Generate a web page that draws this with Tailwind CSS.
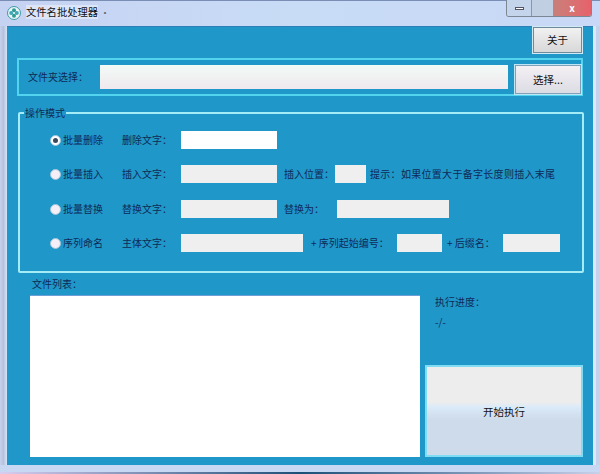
<!DOCTYPE html>
<html lang="zh">
<head>
<meta charset="utf-8">
<script src="https://cdn.jsdelivr.net/npm/@tailwindcss/browser@4"></script>
<title>文件名批处理器</title>
</head>
<body class="m-0">
<div class="w-[600px] h-[474px] overflow-hidden flex flex-col bg-[#c9d8f2] text-[10px] leading-[14px] text-[#0f2a58] font-['Noto_Sans_CJK_SC','Liberation_Sans',sans-serif]">
  <!-- title bar -->
  <div class="h-[26px] shrink-0 flex items-start bg-gradient-to-r from-[#c6d2f2] via-[#c8dcf6] to-[#c8d8f6] border-t border-[#7a8db5]">
    <div class="ml-[7px] mt-[5px] w-[14px] h-[14px]">
      <svg viewBox="0 0 14 14" class="w-[14px] h-[14px]"><circle cx="7" cy="7" r="6.5" fill="#e8f4f6" stroke="#3e9aa8"/><circle cx="7" cy="4.2" r="2" fill="#2e9c94"/><circle cx="7" cy="9.8" r="2" fill="#2e9c94"/><circle cx="4.2" cy="7" r="2" fill="#3fa7b5"/><circle cx="9.8" cy="7" r="2" fill="#3fa7b5"/></svg>
    </div>
    <span class="ml-[5px] mt-[4px] text-[#101010] text-[10.3px] bg-white/40">文件名批处理器</span>
    <span class="ml-[2px] mt-[5px] text-[#667] text-[10px]">·</span>
    <div class="ml-auto mr-[8px] -mt-px h-[17px] w-[86px] flex border border-t-0 border-[#7c8796] rounded-b-[3px] overflow-hidden">
      <div class="w-[24px] bg-[#c4d4ea] flex items-center justify-center"><div class="w-[9px] h-[3px] bg-white border border-[#556]"></div></div>
      <div class="w-[22px] bg-[#c0d0e2] border-l border-[#8a97a8]"></div>
      <div class="flex-1 bg-gradient-to-r from-[#c8807a] to-[#e6616b] flex items-center justify-center text-white text-[10px] font-bold leading-none">x</div>
    </div>
  </div>
  <div class="h-[439px] shrink-0 flex">
    <div class="w-[7px] shrink-0 bg-gradient-to-r from-[#c6d2ec] via-[#b4c3de] to-[#d8e4f6]"></div>
    <!-- content -->
    <div class="w-[586px] shrink-0 bg-[#2097c9] border-t border-[#2f7fb5] flex flex-col">
      <div class="flex justify-end pr-[11px]">
        <button class="w-[49px] h-[26px] border border-[#6f8a9c] bg-gradient-to-b from-[#f1f1f1] to-[#d8d8d8] text-[#111] text-[10.5px] shadow-[0_0_0_1px_#cfeaf5]">关于</button>
      </div>
      <!-- folder -->
      <div class="mt-[5px] ml-[10px] w-[566px] h-[38px] border-2 border-[#52d4ee] flex items-start pt-[5px]">
        <span class="ml-[9px] w-[72px] mt-[5px]">文件夹选择：</span>
        <div class="w-[408px] h-[24px] bg-gradient-to-b from-[#f2fbf6] to-[#f0e8ee]"></div>
        <button class="ml-[7px] w-[66px] h-[29px] border border-[#7fa0b8] bg-gradient-to-b from-[#f4f0f4] to-[#dcdce4] text-[#111] text-[10.5px] shadow-[0_0_0_1px_#bfe6f5]">选择...</button>
      </div>
      <!-- mode group -->
      <div class="relative mt-[16px] ml-[11px] w-[566px] h-[161px] border-2 border-[#a4ecf6] rounded-[2px] flex flex-col pt-[17px]">
        <span class="absolute left-[4px] -top-[8px] px-[1px] bg-[#2097c9]">操作模式</span>
        <div class="flex items-center h-[18px]">
          <span class="ml-[30px] w-[11px] h-[11px] rounded-full bg-white border border-[#9fc4d8] flex items-center justify-center"><span class="w-[5px] h-[5px] rounded-full bg-[#3b4a5c]"></span></span>
          <span class="ml-[2px] w-[59px]">批量删除</span>
          <span class="w-[59px]">删除文字：</span>
          <div class="w-[96px] h-[18px] bg-white"></div>
        </div>
        <div class="flex items-center h-[18px] mt-[16px]">
          <span class="ml-[30px] w-[11px] h-[11px] rounded-full bg-[#f4eef6] border border-[#9fc4d8]"></span>
          <span class="ml-[2px] w-[59px]">批量插入</span>
          <span class="w-[59px]">插入文字：</span>
          <div class="w-[96px] h-[18px] bg-[#efefef]"></div>
          <span class="ml-[7px] w-[51px]">插入位置：</span>
          <div class="w-[31px] h-[18px] bg-[#efefef]"></div>
          <span class="ml-[4px] tracking-[0.3px]">提示：如果位置大于备字长度则插入末尾</span>
        </div>
        <div class="flex items-center h-[18px] mt-[17px]">
          <span class="ml-[30px] w-[11px] h-[11px] rounded-full bg-[#f4eef6] border border-[#9fc4d8]"></span>
          <span class="ml-[2px] w-[59px]">批量替换</span>
          <span class="w-[59px]">替换文字：</span>
          <div class="w-[96px] h-[18px] bg-[#efefef]"></div>
          <span class="ml-[7px] w-[53px]">替换为：</span>
          <div class="w-[112px] h-[18px] bg-[#efefef]"></div>
        </div>
        <div class="flex items-center h-[18px] mt-[16px]">
          <span class="ml-[30px] w-[11px] h-[11px] rounded-full bg-[#f4eef6] border border-[#9fc4d8]"></span>
          <span class="ml-[2px] w-[59px]">序列命名</span>
          <span class="w-[59px]">主体文字：</span>
          <div class="w-[122px] h-[18px] bg-[#efefef]"></div>
          <span class="ml-[8px] w-[86px]">+ 序列起始编号：</span>
          <div class="w-[45px] h-[18px] bg-[#efefef]"></div>
          <span class="ml-[5px] w-[56px]">+ 后缀名：</span>
          <div class="w-[57px] h-[18px] bg-[#efefef]"></div>
        </div>
      </div>
      <!-- bottom -->
      <div class="flex flex-1 ml-[23px] mt-[4px]">
        <div class="w-[390px] flex flex-col">
          <span class="ml-[2px] h-[14px]">文件列表：</span>
          <div class="mt-[4px] h-[162px] bg-white border-t border-[#6d9fd6]"></div>
        </div>
        <div class="flex-1 flex flex-col ml-[5px] pr-[10px]">
          <span class="ml-[10px] mt-[18px]">执行进度：</span>
          <span class="ml-[10px] mt-[6px]">-/-</span>
          <button class="mt-[36px] w-[158px] h-[92px] pt-[2px] border-2 border-[#7fdcf2] bg-gradient-to-b from-[#ededed] from-40% via-[#dcebf8] via-45% to-[#cddbea] to-60% text-[#111] text-[10.5px]">开始执行</button>
        </div>
      </div>
    </div>
    <div class="w-[7px] shrink-0 flex"><div class="w-[3px] bg-[#dbe8fa]"></div><div class="w-[4px] bg-[#c4d2ec]"></div></div>
  </div>
  <div class="h-[9px] shrink-0 bg-[#c9d8f2] flex items-end">
    <div class="h-[2px] w-full bg-gradient-to-r from-[#d8cdf0] via-[#1a4f78] to-[#c8d0ea]"></div>
  </div>
</div>
</body>
</html>
